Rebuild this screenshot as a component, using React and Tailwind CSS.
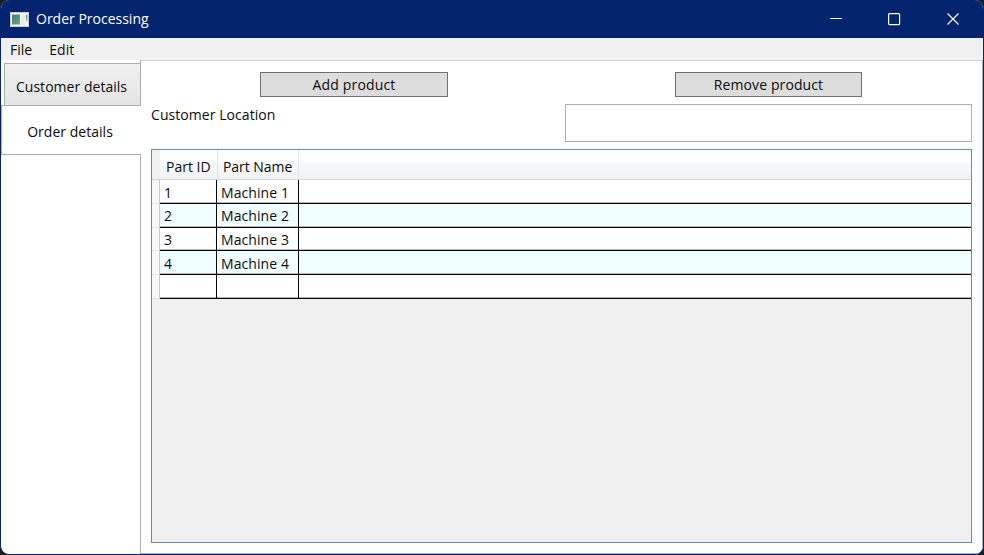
const parts = [
  { id: '1', name: 'Machine 1', row: 'h-[24px] bg-white' },
  { id: '2', name: 'Machine 2', row: 'h-[24px] bg-[#f0ffff] pb-[2px]' },
  { id: '3', name: 'Machine 3', row: 'h-[23px] bg-white' },
  { id: '4', name: 'Machine 4', row: 'h-[24px] bg-[#f0ffff]' },
  { id: '', name: '', row: 'h-[24px] bg-white' },
];

function TitleBar() {
  return (
    <header className="flex h-[38px] shrink-0 items-center bg-[#04246f] text-white">
      <svg className="ml-[9px]" width="19" height="15" viewBox="0 0 19 15">
        <defs>
          <linearGradient id="app" x1="0" y1="0" x2="1" y2="1">
            <stop offset="0" stopColor="#4a7a98" />
            <stop offset="1" stopColor="#5fae70" />
          </linearGradient>
          <linearGradient id="strip" x1="0" y1="0" x2="0" y2="1">
            <stop offset="0" stopColor="#4f86a0" />
            <stop offset="1" stopColor="#a5cfb2" />
          </linearGradient>
        </defs>
        <rect width="19" height="15" fill="#c9cdd0" />
        <rect x="1" y="1" width="17" height="13" fill="#f3f4f4" />
        <rect x="2" y="2.5" width="8" height="10" fill="url(#app)" />
        <rect x="11" y="3" width="4" height="10" fill="#e9eded" />
        <rect x="16" y="3" width="1.5" height="6" fill="url(#strip)" />
      </svg>
      <h1 className="ml-[7px] text-[14px] tracking-[0px]">Order Processing</h1>
      <div className="ml-auto mr-[23px] flex">
        <svg className="mr-[45px]" width="13" height="13" viewBox="0 0 13 13" stroke="#fff" fill="none">
          <path d="M0 5.5H12" />
        </svg>
        <svg className="mr-[46px]" width="13" height="13" viewBox="0 0 13 13" stroke="#fff" fill="none">
          <rect x=".6" y=".6" width="11" height="11" rx="1" strokeWidth="1.2" />
        </svg>
        <svg width="13" height="13" viewBox="0 0 13 13" stroke="#fff" fill="none">
          <path d="M.5.5L11.5 11.5M11.5 .5L.5 11.5" strokeWidth="1.1" />
        </svg>
      </div>
    </header>
  );
}

function PartsGrid() {
  return (
    <div className="mt-[7px] h-[394px] border border-[#688caf] bg-[#f0f0f0]">
      <div className="flex h-[30px] items-center border-b border-[#d5d5d5] bg-[linear-gradient(#fff_0%,#fff_42%,#f7f8fa_43%,#f1f2f4_100%)]">
        <div className="h-full w-[8px] bg-[#f0f0f0]" />
        <div className="flex h-full w-[58px] items-center border-r border-[#e2e3e5] pl-[6px] pt-[5px]">Part ID</div>
        <div className="flex h-full w-[81px] items-center border-r border-[#e2e3e5] pl-[5px] pt-[5px] tracking-[-0.05px]">Part Name</div>
      </div>
      {parts.map((part, i) => (
        <div key={i} className="flex">
          <div className="w-[8px] border-b border-r border-b-[#e4e4e4] border-r-[#c9cacc] bg-[#f8f8f9]" />
          <div className={`flex grow items-stretch border-b border-black shadow-[inset_0_-1px_0_#b5b9b9] ${part.row}`}>
            <div className="relative flex w-[57px] items-center pl-[4px] pt-[2px]">
              {part.id}
              <i className="absolute right-0 top-0 h-[23px] w-px bg-black" />
            </div>
            <div className="relative flex w-[82px] items-center pl-[4px] pt-[2px] tracking-[0.08px]">
              {part.name}
              <i className="absolute right-0 top-0 h-[23px] w-px bg-black" />
            </div>
          </div>
        </div>
      ))}
    </div>
  );
}

export default function App() {
  return (
    <div className="h-[555px] w-[984px] bg-[#1c1c1c] font-['Open_Sans','Noto_Sans',sans-serif] text-[14px] leading-[18px] text-[#0c0c0c]">
      <div className="flex h-[555px] flex-col overflow-hidden rounded-[9px] border border-t-0 border-[#04246f] bg-white">
        <TitleBar />
        <nav className="flex h-[22px] shrink-0 items-center gap-[17px] bg-[#f0f0f0] pl-[9px] pt-[2px]">
          <span>File</span>
          <span className="tracking-[0.1px]">Edit</span>
        </nav>
        <main className="flex grow">
          <aside className="flex w-[139px] flex-col">
            <div className="ml-[3px] mt-[3px] flex h-[42px] items-center justify-center border-l border-t border-[#acacac] bg-linear-to-b from-[#f0f0f0] to-[#e5e5e5] pr-[2px] pt-[5px] tracking-[0.03px]">
              Customer details
            </div>
            <div className="flex h-[50px] items-center justify-center border-y border-l border-[#acacac] pr-[2px] pt-[4px] tracking-[0.03px]">
              Order details
            </div>
          </aside>
          <div className="flex w-px flex-col bg-[#acacac] pt-[46px]">
            <div className="h-[48px] bg-white" />
          </div>
          <section className="grow border-b border-r border-t border-[#acacac] border-t-[#d0d0d0] pl-[10px] pr-[10px]">
            <div className="flex pt-[11px]">
              <button className="ml-[109px] h-[25px] w-[188px] border border-[#707070] bg-[#ddd] tracking-[0.15px]">Add product</button>
              <button className="ml-[227px] h-[25px] w-[187px] border border-[#707070] bg-[#ddd] tracking-[0.1px]">Remove product</button>
            </div>
            <div className="mt-[7px] flex justify-between">
              <label htmlFor="location" className="pt-[2px] tracking-[0.06px]">Customer Location</label>
              <input id="location" className="h-[38px] w-[407px] border border-[#abadb3] bg-white outline-none" />
            </div>
            <PartsGrid />
          </section>
        </main>
      </div>
    </div>
  );
}
